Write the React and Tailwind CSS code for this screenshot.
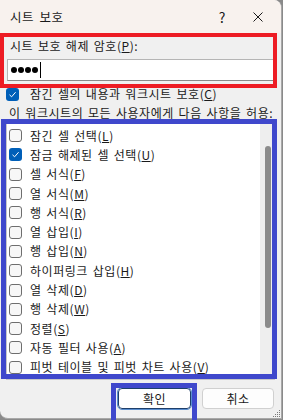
import React from "react";

const FONT = { fontFamily: '"Malgun Gothic","Noto Sans CJK KR","Noto Sans",sans-serif' };

function Box({ checked }) {
  if (checked) {
    return (
      <span className="flex h-[13px] w-[13px] shrink-0 items-center justify-center rounded-[3px] bg-[#005fb8]">
        <svg width="9" height="9" viewBox="0 0 9 9">
          <path d="M1.5 4.8 L3.6 6.8 L7.6 2.2" fill="none" stroke="#ffffff" strokeWidth="1" />
        </svg>
      </span>
    );
  }
  return <span className="h-[13px] w-[13px] shrink-0 rounded-[3px] border border-[#6e6e6e] bg-[#f7f7f7]" />;
}

function Mn({ pre, k, post = ")" }) {
  return (
    <span>
      {pre}(<span className="underline underline-offset-[1px]">{k}</span>{post}
    </span>
  );
}

const items = [
  ["잠긴 셀 선택", "L", false],
  ["잠금 해제된 셀 선택", "U", true],
  ["셀 서식", "F", false],
  ["열 서식", "M", false],
  ["행 서식", "R", false],
  ["열 삽입", "I", false],
  ["행 삽입", "N", false],
  ["하이퍼링크 삽입", "H", false],
  ["열 삭제", "D", false],
  ["행 삭제", "W", false],
  ["정렬", "S", false],
  ["자동 필터 사용", "A", false],
  ["피벗 테이블 및 피벗 차트 사용", "V", false],
];

export default function App() {
  return (
    <div className="relative h-[420px] w-[283px] overflow-hidden bg-[#8a8a8a]" style={FONT}>
      <div className="flex h-[419px] w-[282px] flex-col overflow-hidden rounded-tr-[8px] rounded-bl-[8px] border-r border-b border-[#a8a8a8] bg-[#f0f0f0] text-[12px] leading-[16px] tracking-[0.55px] text-[#1a1a1a] [word-spacing:1.5px]">
        {/* title bar */}
        <div className="flex h-[33px] shrink-0 items-center bg-[#f8f2ee] pl-[10px]">
          <span className="text-[12.5px] [word-spacing:2px]">시트 보호</span>
          <span className="ml-auto mr-[27px] text-[14px]">?</span>
          <svg width="10" height="10" viewBox="0 0 10 10" className="mr-[18px]">
            <path d="M0.5 0.5 L9.5 9.5 M9.5 0.5 L0.5 9.5" stroke="#1a1a1a" strokeWidth="1" />
          </svg>
        </div>

        {/* password label */}
        <div className="mt-[5px] pl-[10px]">
          <Mn pre="시트 보호 해제 암호" k="P" post="):" />
        </div>

        {/* input */}
        <div className="mx-[7px] mt-[5px] flex h-[22px] items-center border border-[#b5b5b5] border-b-[#8a8a8a] bg-white pl-[3px]">
          <span className="flex gap-[1px]">
            {[0, 1, 2, 3].map((i) => (
              <span key={i} className="h-[6px] w-[6px] rounded-full bg-black" />
            ))}
          </span>
          <span className="ml-[2px] h-[16px] w-px bg-black" />
        </div>

        {/* protect checkbox */}
        <div className="mt-[5px] flex h-[16px] items-center pl-[6px]">
          <Box checked />
          <span className="ml-[11px]">
            <Mn pre="잠긴 셀의 내용과 워크시트 보호" k="C" />
          </span>
        </div>

        {/* allow line */}
        <div className="mt-[3px] h-[16px] whitespace-nowrap pl-[9px]">이 워크시트의 모든 사용자에게 다음 사항을 허용:</div>

        {/* list */}
        <div className="mx-[6px] mt-[1px] flex h-[258px] shrink-0 overflow-hidden border border-[#c8c8c8] bg-white">
          <div className="flex flex-1 flex-col pl-[2px] pt-[3px]">
            {items.map(([t, k, c]) => (
              <div key={k} className="flex h-[19.3px] shrink-0 items-center whitespace-nowrap">
                <Box checked={c} />
                <span className="ml-[8px]">
                  <Mn pre={t} k={k} />
                </span>
              </div>
            ))}
          </div>
          <div className="w-[14px] shrink-0 bg-[#eeeeee] pl-[5px] pt-[23px]">
            <div className="h-[182px] w-[6px] rounded-full bg-[#8b8b8b]" />
          </div>
        </div>

        {/* buttons */}
        <div className="mt-[8px] flex justify-end gap-[11px] pr-[7px]">
          <button className="h-[21px] w-[73px] rounded-[4px] border border-[#1f3f6a] bg-white text-[12px] text-[#1a1a1a] outline outline-1 outline-[#5b8fd0]">
            확인
          </button>
          <button className="h-[21px] w-[72px] rounded-[4px] border border-[#d0d0d0] bg-[#fdfdfd] text-[12px] text-[#1a1a1a]">
            취소
          </button>
        </div>
      </div>

      {/* resize grip */}
      <svg width="8" height="8" viewBox="0 0 8 8" className="absolute bottom-[2px] right-[2px]">
        {[[6, 0], [4, 2], [6, 2], [2, 4], [4, 4], [6, 4], [0, 6], [2, 6], [4, 6], [6, 6]].map(([x, y], i) => (
          <rect key={i} x={x} y={y} width="1" height="1" fill="#7a7a7a" />
        ))}
      </svg>

      {/* annotation overlays */}
      <div className="pointer-events-none absolute left-0 top-[33px] h-[55px] w-[277px] border-[4px] border-[#ed1c24]" />
      <div className="pointer-events-none absolute left-[1px] top-[119px] h-[260px] w-[276px] border-[5px] border-[#3f48cc]" />
      <div className="pointer-events-none absolute left-[111px] top-[383px] h-[42px] w-[86px] border-[5px] border-[#3f48cc]" />
    </div>
  );
}
